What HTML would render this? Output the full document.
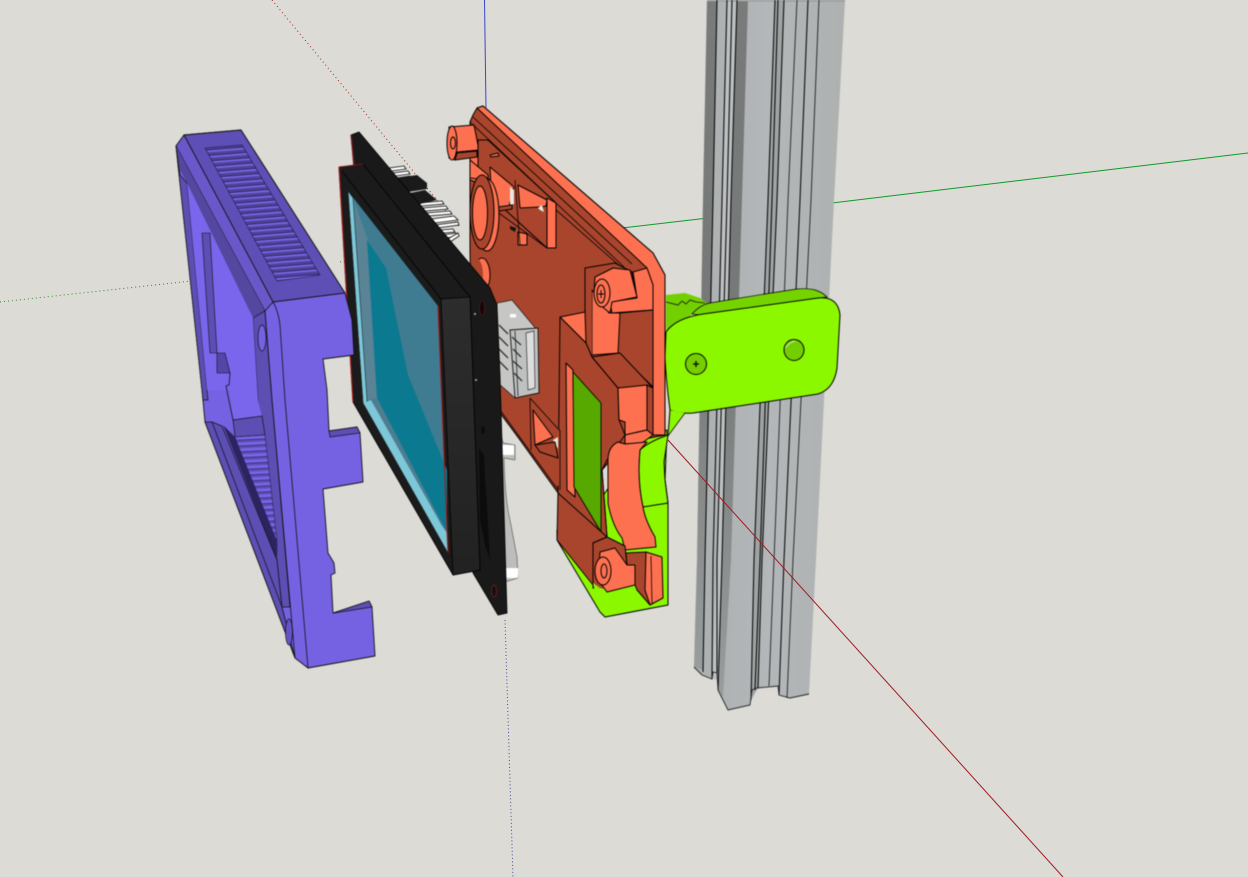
<!DOCTYPE html>
<html><head><meta charset="utf-8"><style>
html,body{margin:0;padding:0;background:#dcdbd6;width:1248px;height:877px;overflow:hidden}
svg{display:block}
.b{filter:blur(.45px)}
.k{fill:none;stroke:#000;stroke-width:1}
.t{fill:none;stroke:#111;stroke-width:.8}
.o{fill:#fe7150}.d{fill:#aa452d}.dd{fill:#9c3f29}
.po{stroke:#000;stroke-width:1;stroke-linejoin:round}
.g{fill:#8cf800}
</style></head><body>
<svg width="1248" height="877" viewBox="0 0 1248 877" xmlns="http://www.w3.org/2000/svg">
<defs>
<pattern id="s1" width="37" height="5.55" patternUnits="userSpaceOnUse" patternTransform="translate(205 148) skewY(-4.6)">
<rect width="37" height="5.55" fill="#4f4399"/><rect y="2.6" width="37" height="1.9" fill="#7a66ea"/><rect y="1.7" width="37" height=".9" fill="#2b2560"/></pattern>
<pattern id="s2" width="37" height="5.9" patternUnits="userSpaceOnUse" patternTransform="translate(235 437) skewY(-3)">
<rect width="37" height="5.9" fill="#7864e6"/><rect y="3.4" width="37" height="2.5" fill="#5c4eb4"/><rect y="3" width="37" height=".7" fill="#2b2560"/></pattern>
<linearGradient id="al" x1="0" x2="1"><stop offset="0" stop-color="#adb0b1"/><stop offset=".5" stop-color="#b3b7b9"/><stop offset="1" stop-color="#adb1b0"/></linearGradient>
<linearGradient id="dk" x1="0" y1="0" x2="0" y2="1"><stop offset="0" stop-color="#787b7a"/><stop offset=".5" stop-color="#767978"/><stop offset="1" stop-color="#989d9d"/></linearGradient>
<linearGradient id="fr" x1="0" y1="0" x2="0" y2="1"><stop offset="0" stop-color="#2d2d2d"/><stop offset="1" stop-color="#222"/></linearGradient>
</defs>
<rect width="1248" height="877" fill="#dcdbd6"/>
<!-- axes -->
<line x1="484.500" y1="0" x2="486" y2="108" stroke="#3b46d0" stroke-width="1"/>
<line x1="505" y1="620" x2="513" y2="877" stroke="#3f4a9c" stroke-width="1" stroke-dasharray="1 2.500"/>
<line x1="272" y1="0" x2="460" y2="228" stroke="#a02c2a" stroke-width="1" stroke-dasharray="1 3"/>
<line x1="0" y1="302" x2="200" y2="280" stroke="#2a8a2a" stroke-width="1" stroke-dasharray="1 3"/>
<line x1="340" y1="262" x2="350" y2="261" stroke="#2a8a2a" stroke-width="1" stroke-dasharray="1 3"/>
<line x1="622" y1="228" x2="708" y2="218" stroke="#0f9a28" stroke-width="1"/>
<line x1="832" y1="203" x2="1248" y2="153" stroke="#0f9a28" stroke-width="1"/>
<!-- extrusion -->
<g class="b">
<polygon points="707,0 845,0 834,200 816,560 809,694 790,698 779,695 778,686 757,688 752,690 750,705 728,710 718,690 718,680 712,679 702,675 694,667 697,560 703,200" fill="url(#al)"/>
<polygon points="707,0 717,0 713,200 705,560 703,670 694,667 697,560 703,200" fill="url(#dk)"/>
<polygon points="737,0 748,0 742,200 731,560 723,697 718,690 722,560 731,200" fill="url(#dk)"/>
<polygon points="775,0 784,0 777,200 762,560 758,688 751,700 754,560 768,200" fill="#9fa3a3"/>
<polygon points="727,0 737,0 731,200 722,560 719,680 712,679 717,560 722,200" fill="#bcc0c1"/>
<rect x="707" y="0" width="138" height="1.500" fill="#98999a"/>
<polyline class="k" points="717,0 713,200 705,560 703,672"/>
<polyline class="k" points="727,0 722,200 713,560 712,678"/>
<polyline class="k" points="732,0 727,200 717,560 717,673"/>
<polyline class="k" points="737,0 731,200 722,560 718,690"/>
<polyline class="k" points="775,0 768,200 754,560 751,700"/>
<polyline class="k" points="778,0 772,200 760,560 755,690"/>
<polyline class="k" points="784,0 777,200 762,560 758,688"/>
<polyline class="t" points="797,0 788,200 774,560 769,686"/>
<polyline class="k" points="808,0 800,200 784,560 779,695"/>
<polyline class="t" points="819,0 811,200 793,560 787,698"/>
<polyline class="k" points="694,667 702,675 712,679 713,672 717,673 718,690 728,710 750,705 752,690 757,688 778,686 779,695 790,698 809,694" style="stroke:#222;stroke-width:.9"/>
</g>
<line x1="668" y1="440" x2="1063" y2="877" stroke="#a01c24" stroke-width="1"/>

<g class="b">
<!-- green bracket -->
<polygon points="666,295 685,293 700,298 707,303 690,316 666,332" fill="#72cf00"/>
<polyline class="t" points="666,302 678,305 682,301 686,304 690,300 696,302 705,303" />
<path d="M692,314 Q700,305 710,303 L765,294 L797,289 Q808,288 815,290 Q822,292 827,297 L700,315Z" fill="#75d400" stroke="#000" stroke-width=".7"/>
<path d="M666,332 Q676,318 703,314 L818,298 Q838,296 840,315 L837,368 Q834,389 818,394 L693,413 Q680,414 670,410 Q666,380 665,357 Z" class="g po"/>
<polygon points="670,410 685,413 668,436" class="g"/>
<line x1="670" y1="410" x2="668" y2="436" stroke="#000"/>
<line x1="685" y1="413" x2="668" y2="436" stroke="#000" stroke-width=".7"/>
<ellipse cx="696" cy="364" rx="10.500" ry="10.500" fill="#76cd00" stroke="#000"/>
<path d="M693,364h6M696,361v6" stroke="#000" stroke-width="1.300"/>
<ellipse cx="794" cy="350" rx="10" ry="10.500" fill="#73ce00" stroke="#000"/>
<path d="M785,348 Q790,342 795,341" stroke="#b7e49a" stroke-width="1.200" fill="none"/>

<!-- lower green base -->
<polygon points="557,530 557,540 600,612 605,617 668,605 668,503 665,480 667,430 642,440 600,500" class="g po"/>
<line x1="642" y1="507" x2="668" y2="503" stroke="#000" stroke-width=".8"/>
<path d="M640,450 Q648,442 668,435 L664,462 L665,480 L668,503 L643,507 Q637,480 640,450Z" class="g po"/>

<!-- orange: main plate -->
<polygon points="473,115 477,108 483,106 653,253 665,275 665,435 625,443 602,470 607,537 593,583 558,493 520,440 472,375 470,250 470,122" class="d po"/>
<polygon points="477,108 483,106 653,253 665,275 665,435 653,435 653,285 647,268 Z" class="o po"/>
<line x1="473" y1="117" x2="632" y2="264" stroke="#000" stroke-width=".8"/>
<line x1="470" y1="122" x2="624" y2="267" stroke="#000" stroke-width=".8"/>
<line x1="505" y1="165" x2="622" y2="268" stroke="#000" stroke-width=".8"/>
<!-- top-left standoff -->
<polygon points="470,125 470,180 478,183 480,150 474,130" class="o po"/>
<polygon points="449,127 474,125 479,150 457,152 455,160 449,158" class="o po"/>
<polygon points="457,153 477,151 477,157 455,160" class="d po"/>
<ellipse cx="452" cy="143" rx="5" ry="17" class="o po"/>
<ellipse cx="453" cy="143" rx="2.500" ry="6" class="o po"/>
<!-- window frame -->
<polygon points="478,140 488,140 556,203 556,248 547,248 478,185" class="d po"/>
<polygon points="490,167 514,187 509,206 492,209" class="o po"/>
<polygon points="510,187 514,190 514,204 510,205" fill="#e8e7e2"/>
<polygon points="518,185 547,200 546,206 540,207 520,208" class="o po"/>
<polygon points="538,208 542,205 544,212 540,210" fill="#e8e7e2"/>
<polygon points="547,198 556,203 556,248 547,248" class="o po"/>
<polygon points="518,232 527,234 527,245 518,245" class="o po"/>
<polygon points="491,208 512,205 512,209 493,212" class="d po"/>
<polygon points="490,155 498,153 499,156 491,157" class="o po"/>
<polygon points="510,226 516,228 515,232 510,229" fill="#111"/>
<polygon points="470,160 488,175 488,180 470,178" class="o po"/>
<line x1="492" y1="208" x2="547" y2="248" stroke="#000" stroke-width=".8"/>
<line x1="515" y1="180" x2="520" y2="245" stroke="#000" stroke-width=".8"/>
<!-- big circle -->
<ellipse cx="487" cy="215" rx="12" ry="36" class="o po"/>
<ellipse cx="482" cy="212" rx="12" ry="37" class="d po"/>
<ellipse cx="480" cy="213" rx="7.500" ry="27" class="o po"/>
<ellipse cx="482" cy="275" rx="8" ry="17" class="o po"/>
<ellipse cx="477" cy="275" rx="6" ry="16" class="d"/>
<!-- top-right standoff area -->
<polygon points="585,268 615,263 632,272 637,298 645,310 653,313 653,320 592,320 585,313" class="d po"/>
<polygon points="633,272 647,268 653,285 653,310 612,313 610,302 637,298" class="o po"/>
<polygon points="592,290 592,355 620,353 620,313 609,313" class="o po"/>
<polygon points="585,313 585,343 592,355 592,290" class="d"/>
<polygon points="620,313 653,310 653,387 618,353" class="d po"/>
<polygon points="595,277 613,268 630,270 637,297 612,302 610,313 600,305 594,293" class="o po"/>
<ellipse cx="602" cy="293" rx="8" ry="14" class="o po"/>
<ellipse cx="601" cy="294" rx="4" ry="9" class="o po"/>
<path d="M598,294h6M601,290v8" stroke="#000" stroke-width=".9"/>
<!-- box faces -->
<polygon points="560,317 585,312 586,343" class="o po"/>
<polygon points="560,317 586,343 592,357 618,388 619,420 625,435 607,460 602,470 607,537 593,543 558,493" class="d po"/>
<polygon points="592,357 620,353 653,388 618,388" class="d po"/>
<polygon points="618,388 647,385 647,430 625,435 625,422 619,420" class="o po"/>
<polygon points="647,385 653,388 653,435 647,430" class="d po"/>
<polygon points="625,435 647,430 653,435 642,443 625,444" class="o po"/>
<!-- green window -->
<polygon points="566,363 573,370 575,497 567,490" class="o po"/>
<polygon points="573,372 601,403 601,532 574,487" fill="#57a900" stroke="#000" stroke-width=".9"/>
<!-- curved arm -->
<path d="M618,442 Q609,446 608,458 L608,503 Q612,525 622,538 L625,550 L656,547 L655,537 Q645,520 643,507 Q637,480 640,450 L647,442 L625,444Z" class="o po"/>
<!-- lower dark box -->
<polygon points="558,493 557,540 593,585 593,543 607,537" class="d po"/>
<polygon points="593,543 607,537 625,546 627,565 610,590 593,588" class="d po"/>
<polygon points="593,583 600,588 610,590 600,596 599,610" class="g"/>
<!-- lower standoff + fin -->
<polygon points="626,553 646,552 650,605 637,590 627,565" class="d po"/>
<polygon points="646,552 662,557 663,598 650,605 645,590" class="o po"/>
<line x1="651" y1="556" x2="652" y2="604" stroke="#000" stroke-width=".8"/>
<polygon points="600,552 615,548 627,565 635,565 635,585 607,592 598,580" class="o po"/>
<ellipse cx="603" cy="571" rx="8" ry="14" class="o po"/>
<ellipse cx="604" cy="571" rx="3" ry="7" class="o po"/>
<!-- lower-left small window -->
<polygon points="530,398 560,430 560,488 500,410 510,398" class="d"/>
<line x1="500" y1="410" x2="558" y2="490" stroke="#000" stroke-width=".9"/>
<line x1="530" y1="398" x2="560" y2="431" stroke="#000" stroke-width=".8"/>
<polygon points="533,410 553,437 535,445" class="o po"/>
<polygon points="553,440 558,437 558,449" fill="#e8e7e2"/>
<polygon points="535,445 555,442 558,458 540,452" class="d po"/>
<line x1="530" y1="398" x2="531" y2="450" stroke="#000" stroke-width=".8"/>
<line x1="560" y1="430" x2="560" y2="490" stroke="#000" stroke-width=".8"/>
<!-- USB -->
<polygon points="497,303 512,300 537,330 539,393 515,398 498,383" fill="#c6c6c5" stroke="#222" stroke-width=".8"/>
<polygon points="510,330 538,328 539,393 515,398" fill="#bfc0c0" stroke="#111" stroke-width=".9"/>
<polygon points="526,333 534,331 535,388 528,390" fill="#dcdddc" stroke="#333" stroke-width=".7"/>
<path d="M512,337 L521,345M513,349 L521,357M513,361 L522,369M514,373 L522,381M499,325 L508,334M499,337 L508,346M499,349 L508,358M499,361 L508,370" stroke="#333" stroke-width="1.300"/>
<rect x="510" y="314" width="6" height="3.500" fill="#fff"/>
<line x1="515" y1="331" x2="518" y2="396" stroke="#222" stroke-width=".8"/>
<!-- gray clip behind screen -->
<path d="M500,430 L503,443 L515,445 L515,460 L504,458 Q505,500 510,520 L517,557 L518,578 L505,582 L500,500Z" fill="#bdbdbb" stroke="#333" stroke-width=".5"/>
<rect x="502" y="445" width="12" height="10" fill="#fff"/>
<rect x="506" y="568" width="12" height="10" fill="#fff"/>
<!-- pins -->
<g stroke="#000" stroke-width=".8" fill="#fff">
<polygon points="389,168 404,166 406,169 391,171"/><polygon points="393,173 408,171 410,174 395,176"/><polygon points="397,178 410,176 412,179 399,181"/>
<polygon points="419,203 442,201 444,204 421,206"/><polygon points="423,208 446,206 448,209 425,211"/><polygon points="426,213 450,211 452,214 428,216"/><polygon points="431,219 454,216 458,220 435,223"/><polygon points="435,225 458,222 459,225 437,228"/><polygon points="441,230 453,229 455,232 443,233"/><polygon points="443,235 456,233 458,236 446,238"/><polygon points="446,240 458,233 459,236 450,242"/>
</g>
<polygon points="398,178 417,175 427,183 427,189 408,192" fill="#1a1a1a"/>
<polygon points="410,193 425,190 437,200 420,204" fill="#1a1a1a"/>
<!-- screen back board -->
<polygon points="351,135 359,132 490,288 497,305 500,375 507,613 498,615 473,573 440,400 360,200 354,170" fill="#191919" stroke="#000" stroke-width=".8"/>
<path d="M351,135 L354,165" stroke="#8c1a1a" stroke-width="1.200"/>
<ellipse cx="482" cy="308" rx="2.500" ry="7" fill="#0a0a0a" stroke="#7a1414" stroke-width=".6"/>
<ellipse cx="494" cy="591" rx="2.500" ry="6" fill="#111" stroke="#8c1a1a" stroke-width=".7"/>
<path d="M479,448 L484,455 L485,480 L486,490 L490,560 L485,545 L480,520Z" fill="#0c0c0c"/>
<ellipse cx="483" cy="430" rx="2" ry="4" fill="#0c0c0c"/>
<circle cx="475" cy="314" r="1" fill="#bbb"/><circle cx="476" cy="380" r="1" fill="#bbb"/>
<!-- screen front board -->
<polygon points="339,167 363,164 470,297 480,570 453,575 353,402" fill="#1b1b1b" stroke="#000" stroke-width=".8"/>
<polygon points="441,299 470,297 480,570 453,575" fill="url(#fr)" stroke="#000" stroke-width=".8"/>
<line x1="342" y1="171" x2="441" y2="299" stroke="#000" stroke-width=".8"/>
<path d="M339,167 L353,402" stroke="#a01818" stroke-width="1.200"/>
<path d="M339,167 L363,164" stroke="#a01818" stroke-width=".8"/>
<!-- display -->
<polygon points="348,191 438,306 448,553 363,403" fill="#3f7c92"/>
<polygon points="353,198 368,240 378,398 367,400" fill="#5a8396"/>
<polygon points="348,191 353,198 367,400 366,405 363,403" fill="#7cc8d8" stroke="#111" stroke-width=".5"/>
<polygon points="363,403 371,400 447,532 448,553" fill="#7cc8d8"/>
<polygon points="367,240 386,268 408,375 447,470 447,533 377,398" fill="#0b7a90"/>
<polygon points="371,400 377,398 447,533 442,526" fill="#4f7d90"/>
<polyline points="438,306 448,553" fill="none" stroke="#9f1c1c" stroke-width="1.200"/>
<polyline points="348,191 363,403 448,553" fill="none" stroke="#222" stroke-width=".6"/>

<!-- purple -->
<polygon points="176,146 184,135 241,130 345,293 352,320 354,355 323,359 327,390 329,431 357,427 360,433 363,482 323,489 328,553 334,563 335,573 331,575 333,613 369,601 372,607 375,656 308,668 295,658 205,422 202,390" fill="#7562e3" stroke="#111" stroke-width=".9" stroke-linejoin="round"/>
<polygon points="184,135 241,130 345,293 273,302" fill="#5d4fb6" stroke="#111" stroke-width=".9"/>
<polygon points="205,148 242,145 320,275 277,281" fill="url(#s1)" stroke="#1d1a45" stroke-width=".6"/>
<polygon points="176,146 184,135 273,302 265,311" fill="#6a58cb" stroke="#111" stroke-width=".8"/>
<polygon points="176,146 265,311 253,318 187,183 180,170" fill="#54479f"/>
<polygon points="176,146 180,175 187,183 208,400 203,400" fill="#5c4eb3" stroke="#111" stroke-width=".7"/>
<polygon points="253,318 265,311 272,400 290,607 282,607 258,400" fill="#5c4eb3" stroke="#111" stroke-width=".7"/>
<ellipse cx="262" cy="338" rx="4" ry="13" fill="#7562e3" stroke="#111" stroke-width=".7"/>
<polygon points="187,183 253,318 258,400 262,417 233,420 230,390 207,390" fill="#7a66ec"/>
<polygon points="202,233 210,233 217,353 210,353" fill="#5c4eb3" stroke="#111" stroke-width=".6"/>
<polygon points="217,353 225,353 230,373 217,373" fill="#5545a8" stroke="#111" stroke-width=".6"/>
<path d="M230,373 L229,385 L226,386 L233,420" class="t"/>
<polygon points="233,420 262,416 265,435 235,437" fill="#5c4eb3" stroke="#111" stroke-width=".7"/>
<polygon points="235,437 265,435 277,541 277,555" fill="url(#s2)" stroke="#1d1a45" stroke-width=".5"/>
<polygon points="223,425 235,437 277,541 277,560" fill="#2a2460"/>
<polygon points="205,422 212,422 222,426 277,560 282,607 295,658" fill="#5c4eb3" stroke="#111" stroke-width=".8"/>
<line x1="212" y1="422" x2="282" y2="607" stroke="#111" stroke-width=".7"/>
<ellipse cx="289" cy="632" rx="3.500" ry="13" fill="#6554c8" stroke="#111" stroke-width=".7"/>
<polygon points="329,431 357,427 360,433 330,437" fill="#5c4eb3" stroke="#111" stroke-width=".7"/>
<polygon points="333,613 369,601 372,607 334,613" fill="#5c4eb3" stroke="#111" stroke-width=".7"/>
<path d="M265,311 L272,400 L295,658" fill="none" stroke="#111" stroke-width=".8"/>
<path d="M273,302 Q278,310 280,325 L285,400 L308,668" fill="none" stroke="#111" stroke-width=".8"/>
</g>
</svg>
</body></html>
